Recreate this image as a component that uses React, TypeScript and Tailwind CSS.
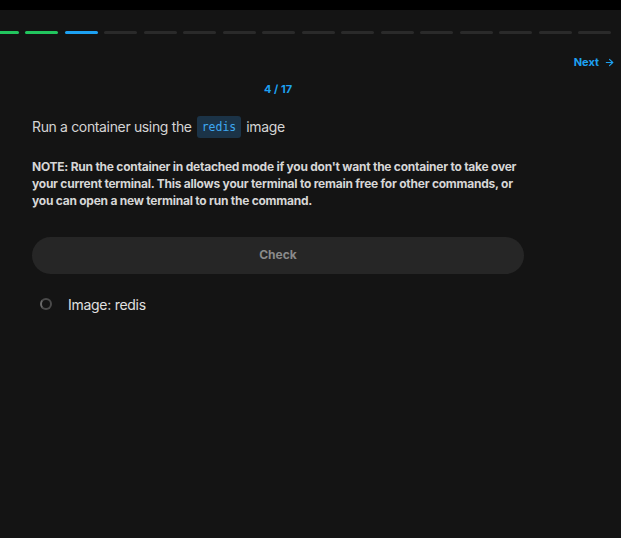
import React from 'react';

const TOTAL = 17;
const CURRENT = 4;

const Progress = () => (
  <div className="overflow-hidden pt-[21px]">
    <div className="flex gap-[6.5px] ml-[-54px]">
      {Array.from({ length: TOTAL }).map((_, i) => {
        const n = i + 1;
        const color = n < CURRENT ? 'bg-[#22c55e]' : n === CURRENT ? 'bg-[#1da1f2]' : 'bg-[#2a2a2a]';
        return <div key={i} className={`h-[3px] w-[33px] shrink-0 rounded-full ${color}`} />;
      })}
    </div>
  </div>
);

export default function App() {
  return (
    <div className="min-h-[538px] w-[621px] bg-[#141414] font-['Inter','Liberation_Sans',sans-serif]">
      <div className="h-[10px] bg-black" />
      <Progress />

      <div className="flex justify-end pr-[6px] pt-[20px]">
        <button className="flex items-center gap-[5px] text-[11px] font-bold text-[#1da1f2]">
          Next
          <svg width="11" height="11" viewBox="0 0 24 24" fill="none" stroke="currentColor" strokeWidth="2.5" strokeLinecap="round" strokeLinejoin="round">
            <path d="M5 12h14" />
            <path d="M12 5l7 7-7 7" />
          </svg>
        </button>
      </div>

      <div className="w-[492px] ml-[32px]">
        <div className="text-center text-[11px] font-bold text-[#1da1f2] mt-[10px] leading-[16px]">4 / 17</div>

        <div className="mt-[19px] text-[14px] leading-[20px] tracking-[-0.025em] text-[#d4d4d4] flex items-center">
          Run a container using the
          <code className="mx-[5px] rounded-[3px] bg-[#1b3347] px-[5px] py-[1px] font-['DejaVu_Sans_Mono',monospace] text-[11.5px] tracking-normal text-[#3ea8f2]">redis</code>
          image
        </div>

        <p className="mt-[20px] text-[12px] font-bold leading-[17px] tracking-[-0.02em] text-[#d6d6d6]">
          NOTE: Run the container in detached mode if you don't want the container to take over your current terminal. This allows your terminal to remain free for other commands, or you can open a new terminal to run the command.
        </p>

        <button className="mt-[28px] h-[37px] w-full rounded-full bg-[#262626] text-[12px] font-bold text-[#8a8a8a]">
          Check
        </button>

        <div className="mt-[20px] flex items-center gap-[16px] pl-[8px]">
          <div className="h-[12px] w-[12px] rounded-full border-[2.5px] border-[#4a4a4a] border-l-[#6a6a6a]" />
          <span className="text-[14px] tracking-[-0.02em] text-[#e0e0e0]">Image: redis</span>
        </div>
      </div>
    </div>
  );
}
